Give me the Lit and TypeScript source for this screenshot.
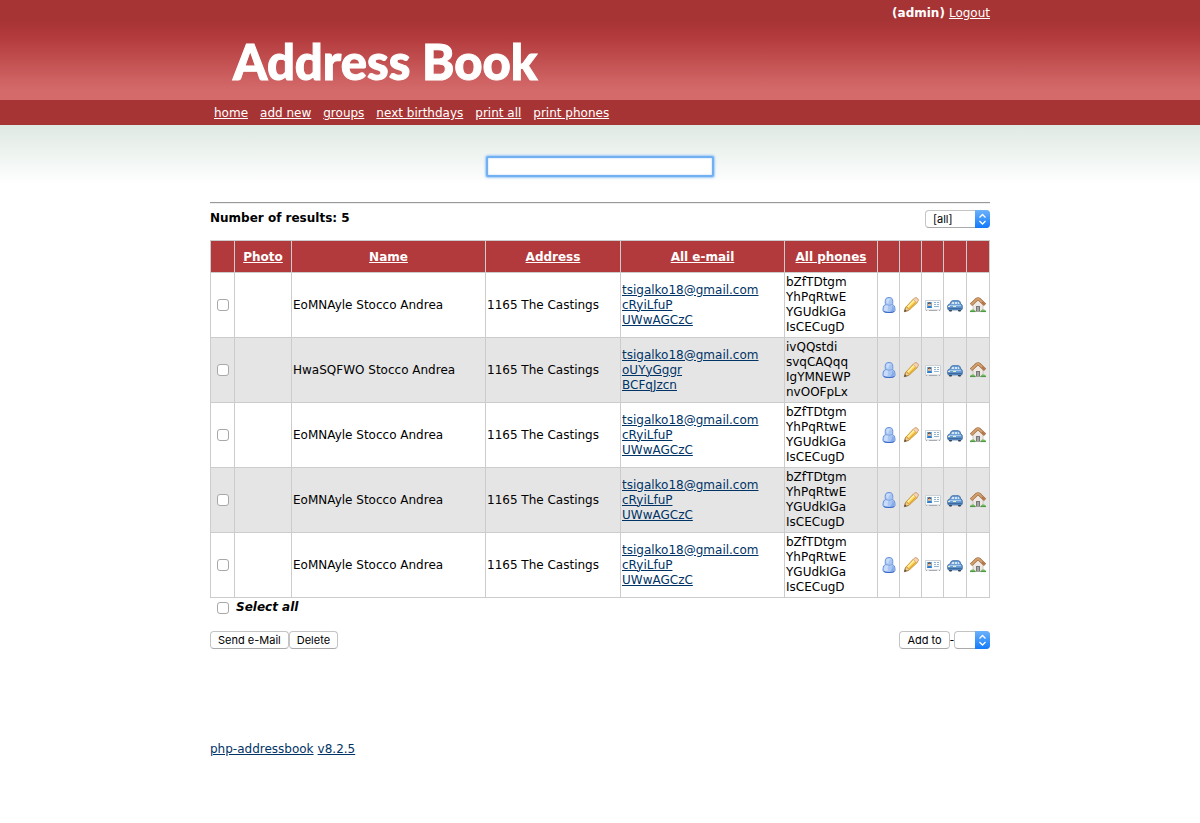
import { LitElement, html, css, svg } from "lit";
import { customElement, property } from "lit/decorators.js";

interface Contact {
  name: string;
  address: string;
  emails: string[];
  phones: string[];
}

const first: Contact = {
  name: "EoMNAyle Stocco Andrea",
  address: "1165 The Castings",
  emails: ["tsigalko18@gmail.com", "cRyiLfuP", "UWwAGCzC"],
  phones: ["bZfTDtgm", "YhPqRtwE", "YGUdkIGa", "IsCECugD"],
};

const second: Contact = {
  name: "HwaSQFWO Stocco Andrea",
  address: "1165 The Castings",
  emails: ["tsigalko18@gmail.com", "oUYyGggr", "BCFqJzcn"],
  phones: ["ivQQstdi", "svqCAQqq", "IgYMNEWP", "nvOOFpLx"],
};

const contacts: Contact[] = [first, second, first, first, first];

const links = ["home", "add new", "groups", "next birthdays", "print all", "print phones"];

const actions = [
  { icon: "person", label: "Details" },
  { icon: "pencil", label: "Edit" },
  { icon: "card", label: "vCard" },
  { icon: "car", label: "Google Maps" },
  { icon: "house", label: "Homepage" },
];

const shapes: Record<string, unknown> = {
  person: svg`
    <path d="M4.500 7.500q-.3-.5-.3-3C4.200 1.500 5.300.5 8 .5s3.800 1 3.800 4q0 2.500-.3 3 2.500.8 2.500 4v2q0 2-6 2t-6-2v-2q0-3.200 2.500-4z" fill="#a9c6f3" stroke="#6a93dd"/>
    <path d="M5.200 4.500c0-2.200.8-3 2.800-3 1 0 1.600.2 2 .6Q7.500 3 7.300 6.800q-2-.3-2.100-2.300zM3 11.500q0-2.500 2-3.200l2.300-.3q-.8 3-.6 6.400-3.700-.2-3.700-1.400z" fill="#c9dcfa"/>
    <path d="M11.300 8.500Q13 9.300 13 11.500V13q0 1.200-4 1.400 2.600-1.900 2.300-5.900z" fill="#86abe9"/>
    <path d="M4.700 7.500Q8 9 11.300 7.500" fill="none" stroke="#7ba0e2" stroke-width=".9"/>
    <path d="M2.700 14.500q1.500 1 5.300 1t5.300-1" fill="none" stroke="#3767c6"/>`,
  pencil: svg`
    <path d="M1.300 14.700 2.500 10.500 5.500 13.500z" fill="#2e2518" stroke="#6d4d22" stroke-width=".7"/>
    <path d="M2.500 10.500 3.800 9.300 6.800 12.300 5.500 13.500 3.200 13.700 2.300 12.700z" fill="#edcf9c" stroke="#bd8739" stroke-width=".7"/>
    <path d="M3.300 9.700 10.500 1.900 14.200 5.600 6.400 12.800z" fill="#f8cf55" stroke="#c38a25" stroke-width=".9"/>
    <path d="M4.700 10 11.300 3.200" stroke="#fff1a6" stroke-width="1.500"/>
    <path d="M6.300 11.500 12.900 5.300" stroke="#e2a532" stroke-width="1"/>
    <path d="M10.300 2.300 11.700 1q1.200-.9 2.300.1l1 1q1 1.100.1 2.200L13.700 5.700z" fill="#f5d3b5" stroke="#c48a5c" stroke-width=".8"/>
    <path d="M10.300 2.500 13.500 5.700" stroke="#d9c5a0"/>`,
  card: svg`
    <path d="M.5 3.500h15v9.500H.5z" fill="#fafbfc" stroke="#cdd0d4"/>
    <path d="M1 13.500h1m2 0h8m2 0h1" stroke="#a8acb2"/>
    <rect x="2" y="5" width="5" height="6" fill="#69b3f0"/>
    <path d="M2 11q.3-2.500 2.500-2.500T7 11z" fill="#2b7cca"/>
    <rect x="3" y="6" width="3" height="3" rx="1" fill="#f3b483"/>
    <path d="M3 7V6q1.500-1.500 3 0v1L5 6.500z" fill="#5c3a24"/>
    <path d="M9 5.500h2m1 0h2M9 7.500h2m1 0h2M9 9.500h5" stroke="#93b3cf"/>`,
  car: svg`
    <rect x="2" y="12" width="3" height="2.500" rx="1" fill="#27313c"/>
    <rect x="11" y="12" width="3" height="2.500" rx="1" fill="#27313c"/>
    <path d="M.7 8.800Q.8 7.500 3 7L4 4.800q.4-1.100 1.600-1.100h5.800q1.200 0 1.600 1.100l.9 2.300q1.400.5 1.400 2v2.600q0 1.200-1.300 1.200H2q-1.300 0-1.300-1.200z" fill="#6c9fd6" stroke="#3f6ea6" stroke-width=".9"/>
    <path d="M4.300 7 5.300 5h1.900v2zM8 5h2v2H8zM10.800 5h.9l.9 2h-1.800z" fill="#d5e6f3"/>
    <path d="M2 8.500h12" stroke="#a6cbed"/>
    <path d="M1.200 11.300h13.600" stroke="#355f93"/>
    <path d="M1 9.500h2m3 0h3" stroke="#e7edcf"/>`,
  house: svg`
    <path d="M3 7.500 8 3l5 4.500v7H3z" fill="#eee9e4" stroke="#c9bfb8" stroke-width=".8"/>
    <path d="M6 9h4v5.500H6z" fill="#777"/><path d="M7 10h2v4.500H7z" fill="#a5a5a5"/>
    <path d="M1 7.800 6.800 2.300Q8 1.300 9.200 2.300L15 7.800" fill="none" stroke="#9e6a42" stroke-width="3.200"/>
    <path d="M1.300 7.500 6.900 2.200Q8 1.300 9.100 2.200l5.600 5.300" fill="none" stroke="#d3a06c" stroke-width="1.900"/>
    <path d="M12 5l2.700 2.600" stroke="#b17146" stroke-width="1.700"/>
    <path d="M0 15q0-2.500 1.800-2.300 1.700-.9 2.400.3 1.300.2 1.300 2zM10.500 15q0-1.800 1.300-2 .7-1.200 2.400-.3 1.800-.2 1.800 2.300z" fill="#6fb85d"/>
    <path d="M0 14.600h5.500m5 0H16" stroke="#468d40" stroke-width=".8"/>`,
};

@customElement("row-icon")
class RowIcon extends LitElement {
  @property() name = "person";

  static styles = css`
    :host { display: block; width: 16px; height: 16px; }
    .icon { display: block; width: 16px; height: 16px; }
  `;

  render() {
    return html`<svg class="icon" viewBox="0 0 16 16" aria-hidden="true">${shapes[this.name]}</svg>`;
  }
}

@customElement("app-root")
class AppRoot extends LitElement {
  static styles = css`
    :host {
      display: block;
      font: 12px/15px Verdana, "DejaVu Sans", sans-serif;
      color: #000;
      background: linear-gradient(#dfe9e3, #fff 60px) 0 125px / 100% 60px no-repeat #fff;
    }
    .wrap { box-sizing: border-box; width: 100%; max-width: 780px; margin: 0 auto; }
    a { color: #036; }
    .banner { background: linear-gradient(#a73434 20px, #b43b3d 38px, #d46a6a 90px); height: 100px; color: #fff; }
    .session { display: flex; justify-content: flex-end; gap: 4px; padding-top: 6px; }
    .session a, .nav a, .head a { color: #fff; }
    .logo { margin: 12px 0 0 23px; font: 900 49px/56px Lato, sans-serif; -webkit-text-stroke: 1px #fff; }
    .nav { background: #a73434; height: 25px; }
    .menu { display: flex; gap: 12px; padding: 6px 4px 4px; }
    .search { display: flex; justify-content: center; padding: 31px 0 25px; }
    .query {
      box-sizing: border-box; width: 228px; height: 21px; padding: 1px 4px; font: inherit;
      background: #fff; border: 2px solid #73b0f1; border-radius: 2px; outline: none;
      box-shadow: 0 0 2px 1px #9ccbf8, inset 0 0 2px #a5cdf7;
    }
    .rule { margin: 0; border: 0; border-top: 1px solid #999; border-bottom: 1px solid #eee; }
    .summary { display: flex; justify-content: space-between; padding: 6px 0 12px; }
    .count { padding-top: 1px; }
    .pick { display: grid; width: 65px; height: 18px; }
    .pick.small { width: 36px; }
    .pick > * { grid-area: 1 / 1; }
    .list {
      appearance: none; box-sizing: border-box; width: 100%; height: 18px; margin: 0; padding: 0 7px;
      font: 11px/16px Inter, sans-serif; color: #000; background: #fff;
      border: 1px solid #c4c4c4; border-bottom-color: #aaa; border-radius: 4px;
    }
    .arrows { justify-self: end; width: 15px; height: 18px; pointer-events: none; }
    .book { width: 100%; border-collapse: collapse; table-layout: fixed; }
    .c-check { width: 24px; } .c-photo { width: 57px; } .c-name { width: 194px; }
    .c-address { width: 135px; } .c-email { width: 164px; } .c-phone { width: 93px; }
    .c-icon { width: 22px; } .c-wide { width: 23px; }
    th, td { border: 1px solid #ccc; padding: 2px 1px; }
    td { text-align: left; }
    .head th { height: 27px; padding: 3px 1px 1px; background: #b2393c; }
    .odd { background: #e5e5e5; }
    .stack { display: flex; flex-direction: column; align-items: flex-start; }
    .center { display: flex; justify-content: center; }
    .action { display: block; padding-left: 2px; }
    .box {
      appearance: none; box-sizing: border-box; display: block; width: 12px; height: 12px; margin: 0;
      background: #fff; border: 1px solid #a8a8a8; border-radius: 3px;
    }
    .box:checked { background: #3b8df5; }
    .all { display: flex; align-items: center; gap: 7px; padding: 2px 7px; font-weight: bold; font-style: italic; }
    .tools { display: flex; justify-content: space-between; padding-top: 14px; }
    .group { display: flex; align-items: center; }
    .btn {
      box-sizing: border-box; height: 18px; padding: 0 7px; font: 11px/15px Inter, sans-serif; color: #000;
      background: #fff; border: 1px solid #c4c4c4; border-bottom-color: #aaa; border-radius: 4px;
    }
    .footer { display: flex; gap: 4px; padding: 93px 0 67px; }
  `;

  private arrows() {
    return html`<svg class="arrows" viewBox="0 0 15 18" aria-hidden="true">
      <defs><linearGradient id="blue" x2="0" y2="1"><stop stop-color="#6bb2fa"/><stop offset="1" stop-color="#147afb"/></linearGradient></defs>
      <path d="M0 0h11q4 0 4 4v10q0 4-4 4H0z" fill="url(#blue)"/>
      <path d="m4.500 7.500 3-3 3 3m-6 3.500 3 3 3-3" fill="none" stroke="#fff" stroke-width="1.300"/>
    </svg>`;
  }

  private row(c: Contact, i: number) {
    return html`<tr class=${i % 2 ? "odd" : "even"}>
      <td><div class="center"><input class="box" type="checkbox" aria-label=${`Select ${c.name}`} /></div></td>
      <td></td>
      <td>${c.name}</td>
      <td>${c.address}</td>
      <td><div class="stack">${c.emails.map((e) => html`<a href="#">${e}</a>`)}</div></td>
      <td><div class="stack">${c.phones.map((p) => html`<span>${p}</span>`)}</div></td>
      ${actions.map((a) => html`<td><a class="action" href="#" aria-label=${a.label}><row-icon name=${a.icon}></row-icon></a></td>`)}
    </tr>`;
  }

  render() {
    return html`
      <header class="banner">
        <div class="wrap">
          <div class="session"><b>(admin)</b><a href="#">Logout</a></div>
          <h1 class="logo">Address Book</h1>
        </div>
      </header>
      <nav class="nav"><div class="wrap menu">${links.map((l) => html`<a href="#">${l}</a>`)}</div></nav>
      <main class="wrap">
        <div class="search"><input class="query" type="text" aria-label="Search" /></div>
        <hr class="rule" />
        <div class="summary">
          <b class="count">Number of results: 5</b>
          <label class="pick"><select class="list" aria-label="Group"><option>[all]</option></select>${this.arrows()}</label>
        </div>
        <table class="book">
          <colgroup>
            <col class="c-check" /><col class="c-photo" /><col class="c-name" /><col class="c-address" />
            <col class="c-email" /><col class="c-phone" /><col class="c-icon" /><col class="c-icon" />
            <col class="c-icon" /><col class="c-wide" /><col class="c-wide" />
          </colgroup>
          <thead>
            <tr class="head">
              <th></th>
              ${["Photo", "Name", "Address", "All e-mail", "All phones"].map((h) => html`<th><a href="#">${h}</a></th>`)}
              ${actions.map(() => html`<th></th>`)}
            </tr>
          </thead>
          <tbody>${contacts.map((c, i) => this.row(c, i))}</tbody>
        </table>
        <label class="all"><input class="box" type="checkbox" />Select all</label>
        <div class="tools">
          <div class="group"><button class="btn">Send e-Mail</button><button class="btn">Delete</button></div>
          <div class="group">
            <button class="btn">Add to</button><span>-</span>
            <label class="pick small"><select class="list" aria-label="Target group"><option></option></select>${this.arrows()}</label>
          </div>
        </div>
        <footer class="footer"><a href="#">php-addressbook</a><a href="#">v8.2.5</a></footer>
      </main>
    `;
  }
}
